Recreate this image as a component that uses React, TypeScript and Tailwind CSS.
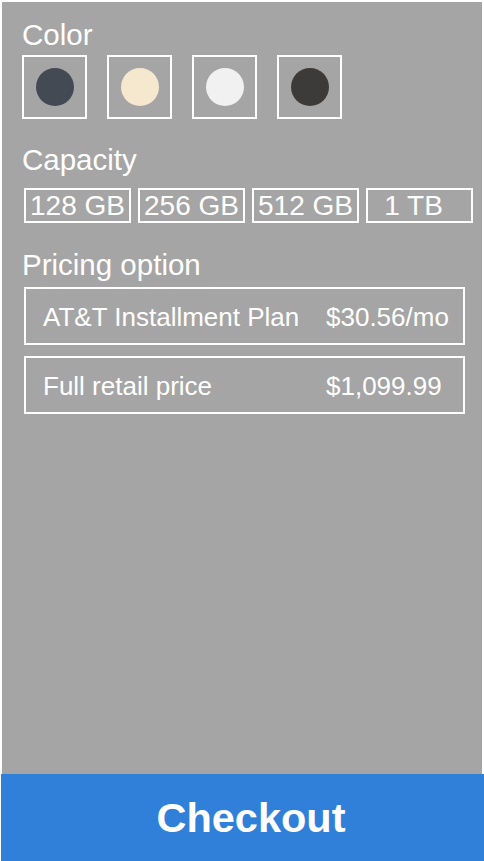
import React from "react";

const swatches = ["#434a54", "#f5e8cf", "#f0f1f0", "#3c3b39"];
const capacities = ["128 GB", "256 GB", "512 GB", "1 TB"];
const pricing = [
  { label: "AT&T Installment Plan", price: "$30.56/mo" },
  { label: "Full retail price", price: "$1,099.99" },
];

export default function App() {
  return (
    <div
      className="w-[484px] h-[861px] bg-white flex flex-col overflow-hidden text-white"
      style={{ fontFamily: '"Liberation Sans", Arial, sans-serif' }}
    >
      <div className="flex-1 mt-[2px] ml-[2px] mr-[2px] bg-[#a5a5a5] pt-[16px] flex flex-col">
        <div className="pl-[20px] text-[29.5px] leading-[33px]">Color</div>
        <div className="flex gap-[20px] ml-[20px] mt-[4px]">
          {swatches.map((c) => (
            <div
              key={c}
              className="w-[65px] h-[64px] border-2 border-white flex items-center justify-center"
            >
              <div className="w-[38px] h-[38px] rounded-full" style={{ backgroundColor: c }} />
            </div>
          ))}
        </div>

        <div className="pl-[20px] mt-[24px] text-[29.5px] leading-[33px]">Capacity</div>
        <div className="flex gap-[7px] ml-[22px] mt-[12px]">
          {capacities.map((c, i) => (
            <div
              key={c}
              className={
                "w-[107px] h-[35px] border-2 border-white flex items-center justify-center text-[28px] leading-[31px] " +
                (i === 3 ? "pr-[12px]" : "")
              }
            >
              {c}
            </div>
          ))}
        </div>

        <div className="pl-[20px] mt-[25px] text-[29.5px] leading-[33px]">Pricing option</div>
        <div className="flex flex-col gap-[11px] ml-[22px] mt-[6px]">
          {pricing.map((p) => (
            <div
              key={p.label}
              className="w-[441px] h-[58px] border-2 border-white flex items-center pl-[17px] pr-[16px] pt-[3px] text-[26px] leading-[29px]"
            >
              <div className="flex-1">{p.label}</div>
              <div className="w-[121px]">{p.price}</div>
            </div>
          ))}
        </div>
      </div>
      <div className="h-[87px] ml-[1px] bg-[#307fd9] flex items-center justify-center pl-[17px]">
        <span className="font-bold text-[41.5px] leading-[47px]">Checkout</span>
      </div>
    </div>
  );
}
